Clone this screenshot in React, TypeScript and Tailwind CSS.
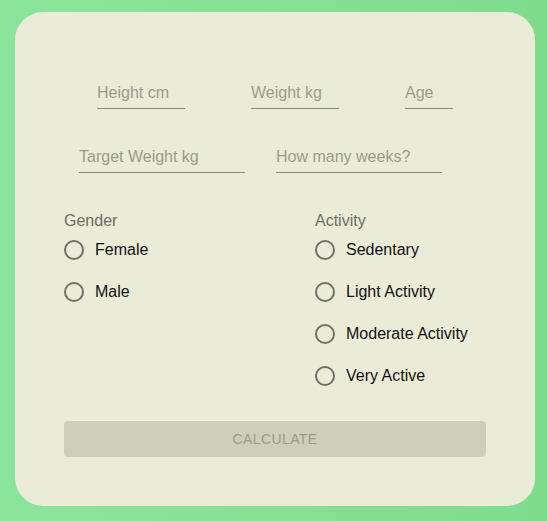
import React from 'react';

function Field({ placeholder, width }: { placeholder: string; width: string }) {
  return (
    <input
      type="text"
      placeholder={placeholder}
      className={`${width} h-[26px] pb-[5px] bg-transparent border-b border-[#8a8b7c] text-[16px] leading-[18px] text-[#222] placeholder:text-[#9a9b8a] outline-none`}
    />
  );
}

function Radio({ label }: { label: string }) {
  return (
    <label className="flex items-center h-[42px] gap-[11px] cursor-pointer">
      <span className="w-5 h-5 rounded-full border-2 border-[#707068] shrink-0" />
      <span className="text-[16px] leading-[18px] text-[#111]">{label}</span>
    </label>
  );
}

export default function App() {
  const genders = ['Female', 'Male'];
  const activities = ['Sedentary', 'Light Activity', 'Moderate Activity', 'Very Active'];

  return (
    <div
      className="w-[547px] h-[521px] pt-[12px] pl-[15px] bg-gradient-to-r from-[#8be49b] to-[#80dc8d]"
      style={{ fontFamily: '"Liberation Sans", Arial, sans-serif' }}
    >
      <div className="w-[520px] h-[494px] rounded-[28px] bg-[#ebecd8] pt-[71px] px-[49px] pb-[49px] flex flex-col">
        <div className="flex justify-center gap-[66px]">
          <Field placeholder="Height cm" width="w-[88px]" />
          <Field placeholder="Weight kg" width="w-[88px]" />
          <Field placeholder="Age" width="w-[48px]" />
        </div>

        <div className="flex gap-[31px] pl-[15px] mt-[38px]">
          <Field placeholder="Target Weight kg" width="w-[166px]" />
          <Field placeholder="How many weeks?" width="w-[166px]" />
        </div>

        <div className="flex mt-[38px]">
          <div className="w-[251px]">
            <div className="h-[18px] text-[16px] leading-[20px] text-[#6d6d63]">Gender</div>
            {genders.map(g => (
              <Radio key={g} label={g} />
            ))}
          </div>
          <div>
            <div className="h-[18px] text-[16px] leading-[20px] text-[#6d6d63]">Activity</div>
            {activities.map(a => (
              <Radio key={a} label={a} />
            ))}
          </div>
        </div>

        <button
          disabled
          className="mt-[24px] h-[36px] w-full rounded-[4px] bg-[#cdcfbb] text-[14px] tracking-[0.4px] text-[#9a9c8c] uppercase"
        >
          Calculate
        </button>
      </div>
    </div>
  );
}
